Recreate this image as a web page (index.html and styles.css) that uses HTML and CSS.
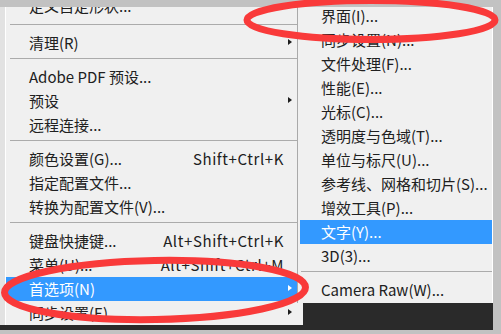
FILE: index.html
```html
<!DOCTYPE html>
<html lang="zh-CN">
<head>
    <meta charset="UTF-8">
    <title>编辑菜单 - 首选项</title>
    <link rel="stylesheet" href="styles.css">
</head>
<body>
    <div class="screen">
        <div class="desk">
            <div class="gutter"></div>

            <!-- 编辑菜单 (下半部分) -->
            <div class="menu main-menu">
                <div class="menu-body">
                    <div class="item"><span class="label">定义自定形状...</span></div>
                    <div class="sep first"></div>
                    <div class="item"><span class="label">清理(R)</span><span class="arrow"></span></div>
                    <div class="sep"></div>
                    <div class="item"><span class="label">Adobe PDF 预设...</span></div>
                    <div class="item"><span class="label">预设</span><span class="arrow"></span></div>
                    <div class="item"><span class="label">远程连接...</span></div>
                    <div class="sep"></div>
                    <div class="item"><span class="label">颜色设置(G)...</span><span class="key">Shift+Ctrl+K</span></div>
                    <div class="item"><span class="label">指定配置文件...</span></div>
                    <div class="item"><span class="label">转换为配置文件(V)...</span></div>
                    <div class="sep"></div>
                    <div class="item"><span class="label">键盘快捷键...</span><span class="key">Alt+Shift+Ctrl+K</span></div>
                    <div class="item"><span class="label">菜单(U)...</span><span class="key">Alt+Shift+Ctrl+M</span></div>
                    <div class="item active"><span class="label">首选项(N)</span><span class="arrow"></span></div>
                    <div class="item"><span class="label">同步设置(E)...</span><span class="arrow"></span></div>
                </div>
            </div>

            <!-- 首选项 子菜单 -->
            <div class="menu sub-menu">
                <div class="menu-body">
                    <div class="item"><span class="label">界面(I)...</span></div>
                    <div class="item"><span class="label">同步设置(N)...</span></div>
                    <div class="item"><span class="label">文件处理(F)...</span></div>
                    <div class="item"><span class="label">性能(E)...</span></div>
                    <div class="item"><span class="label">光标(C)...</span></div>
                    <div class="item"><span class="label">透明度与色域(T)...</span></div>
                    <div class="item"><span class="label">单位与标尺(U)...</span></div>
                    <div class="item"><span class="label">参考线、网格和切片(S)...</span></div>
                    <div class="item"><span class="label">增效工具(P)...</span></div>
                    <div class="item active"><span class="label">文字(Y)...</span></div>
                    <div class="item"><span class="label">3D(3)...</span></div>
                    <div class="sep"></div>
                    <div class="item"><span class="label">Camera Raw(W)...</span></div>
                </div>
            </div>
        </div>

        <!-- 红色标注圈 -->
        <svg class="marks" width="501" height="334" viewBox="0 0 501 334">
            <ellipse cx="371" cy="20" rx="124" ry="19.5" />
            <ellipse cx="155" cy="290" rx="150.5" ry="29.5" transform="rotate(-1 155 290)" />
        </svg>
    </div>
</body>
</html>
```

FILE: styles.css
```css
* {
    margin: 0;
    padding: 0;
    box-sizing: border-box;
}

body {
    background: #c2c2c2;
    font-family: "Noto Sans CJK SC", "Noto Sans", sans-serif;
    font-size: 15px;
    color: #202020;
}

.screen {
    position: relative;
    width: 501px;
    height: 334px;
    padding: 7px 8px 4px 0;
    overflow: hidden;
}

.desk {
    position: relative;
    display: flex;
    align-items: flex-start;
    height: 323px;
    background: #2a2a2a;
}

.gutter {
    width: 5px;
    height: 318px;
    background: #e2e2e2;
}

.menu {
    background: #f0f0f0;
    overflow: hidden;
}

.main-menu {
    width: 298px;
    height: 318px;
    border-left: 1px solid #ffffff;
}

.main-menu .menu-body {
    margin-top: -13px;
}

.sub-menu {
    position: absolute;
    top: 0;
    left: 297px;
    width: 196px;
    height: 296px;
    padding-left: 2px;
    border-left: 1px solid #a9a9a9;
    border-right: 1px solid #ffffff;
}

.sub-menu .menu-body {
    margin-top: -3px;
}

.item {
    display: flex;
    align-items: center;
    height: 24px;
    padding-left: 23px;
    white-space: nowrap;
    line-height: 24px;
}

.sub-menu .item {
    padding-left: 21px;
}

.label {
    flex: 1;
}

.key {
    padding-right: 19px;
    letter-spacing: 0.6px;
}

.arrow {
    width: 19px;
    height: 24px;
    position: relative;
}

.arrow::after {
    content: "";
    position: absolute;
    left: 4px;
    top: 8px;
    border-left: 4px solid #1c1c1c;
    border-top: 3.5px solid transparent;
    border-bottom: 3.5px solid transparent;
}

.item.active {
    background: #3399ff;
    color: #ffffff;
}

.item.active .arrow::after {
    border-left-color: #ffffff;
}

.sep {
    height: 1px;
    margin: 3px 0 6px 4px;
    background: #ababab;
}

.sep.first {
    margin-top: 6px;
}

.sub-menu .sep {
    margin: 3px 0 6px 1px;
}

.marks {
    position: absolute;
    top: 0;
    left: 0;
    pointer-events: none;
}

.marks ellipse {
    fill: none;
    stroke: #f93a3a;
    stroke-width: 7;
}
```
